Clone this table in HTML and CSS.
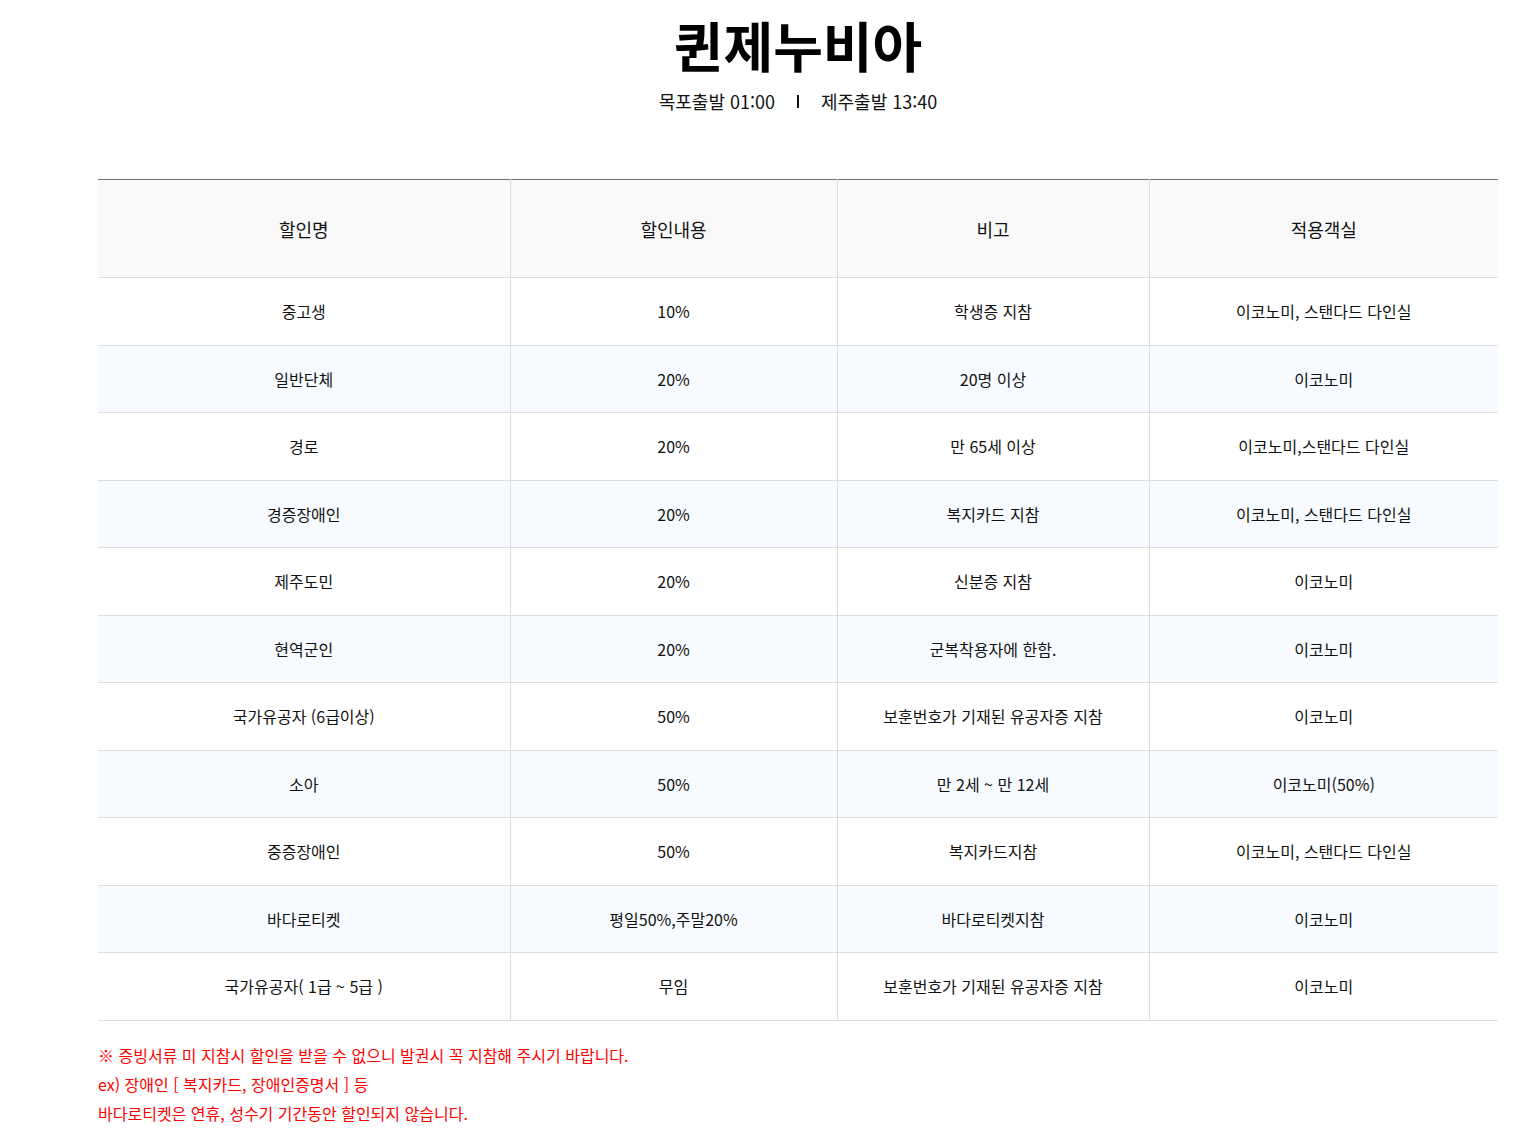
FILE: index.html
```html
<!DOCTYPE html>
<html lang="ko">
<head>
<meta charset="utf-8">
<title>퀸제누비아</title>
<link rel="stylesheet" href="styles.css">
</head>
<body>
<div class="wrap">
  <h1 class="title">퀸제누비아</h1>
  <p class="sched"><span>목포출발 01:00</span><span class="bar"></span><span>제주출발 13:40</span></p>
  <table class="tbl">
    <colgroup>
      <col class="c1"><col class="c2"><col class="c3"><col class="c4">
    </colgroup>
    <thead>
      <tr><th>할인명</th><th>할인내용</th><th>비고</th><th>적용객실</th></tr>
    </thead>
    <tbody>
      <tr><td>중고생</td><td>10%</td><td>학생증 지참</td><td>이코노미, 스탠다드 다인실</td></tr>
      <tr><td>일반단체</td><td>20%</td><td>20명 이상</td><td>이코노미</td></tr>
      <tr><td>경로</td><td>20%</td><td>만 65세 이상</td><td>이코노미,스탠다드 다인실</td></tr>
      <tr><td>경증장애인</td><td>20%</td><td>복지카드 지참</td><td>이코노미, 스탠다드 다인실</td></tr>
      <tr><td>제주도민</td><td>20%</td><td>신분증 지참</td><td>이코노미</td></tr>
      <tr><td>현역군인</td><td>20%</td><td>군복착용자에 한함.</td><td>이코노미</td></tr>
      <tr><td>국가유공자 (6급이상)</td><td>50%</td><td>보훈번호가 기재된 유공자증 지참</td><td>이코노미</td></tr>
      <tr><td>소아</td><td>50%</td><td>만 2세 ~ 만 12세</td><td>이코노미(50%)</td></tr>
      <tr><td>중증장애인</td><td>50%</td><td>복지카드지참</td><td>이코노미, 스탠다드 다인실</td></tr>
      <tr><td>바다로티켓</td><td>평일50%,주말20%</td><td>바다로티켓지참</td><td>이코노미</td></tr>
      <tr><td>국가유공자( 1급 ~ 5급 )</td><td>무임</td><td>보훈번호가 기재된 유공자증 지참</td><td>이코노미</td></tr>
    </tbody>
  </table>
  <div class="notes">
    <p>※ 증빙서류 미 지참시 할인을 받을 수 없으니 발권시 꼭 지참해 주시기 바랍니다.</p>
    <p>ex) 장애인 [ 복지카드, 장애인증명서 ] 등</p>
    <p>바다로티켓은 연휴, 성수기 기간동안 할인되지 않습니다.</p>
  </div>
</div>
</body>
</html>
```
FILE: styles.css
```css
html, body {
  margin: 0;
  padding: 0;
  background: #fff;
}
body {
  font-family: "Noto Sans CJK KR", "Noto Sans", sans-serif;
  color: #111;
}
.wrap {
  width: 1400px;
  margin-left: 98px;
}
.title {
  margin: 0;
  padding-top: 10px;
  text-align: center;
  font-size: 54px;
  font-weight: 700;
  line-height: 70px;
  color: #000;
}
.sched {
  margin: 8px 0 0;
  display: flex;
  justify-content: center;
  align-items: center;
  gap: 21px;
  font-size: 18px;
  line-height: 26px;
  color: #111;
}
.sched .bar {
  display: inline-block;
  width: 2px;
  height: 13px;
  background: #111;
  margin: 0 1px;
}
.tbl {
  margin-top: 65px;
  width: 1400px;
  border-collapse: collapse;
  table-layout: fixed;
  border-top: 1px solid #777;
  font-size: 16px;
}
.c1 { width: 412px; }
.c2 { width: 327px; }
.c3 { width: 312px; }
.c4 { width: 349px; }
.tbl th {
  height: 97px;
  background: #f9f9f9;
  font-weight: 400;
  font-size: 18px;
  color: #111;
  border-bottom: 1px solid #ddd;
  border-left: 1px solid #ddd;
  padding: 0;
}
.tbl td {
  height: 66.5px;
  text-align: center;
  border-bottom: 1px solid #ddd;
  border-left: 1px solid #ddd;
  padding: 0;
  color: #111;
}
.tbl th:first-child, .tbl td:first-child { border-left: none; }
.tbl tbody tr:nth-child(even) td { background: #f7fbff; }
.notes {
  margin-top: 20px;
  color: #ff0000;
  font-size: 16px;
  line-height: 29px;
}
.notes p { margin: 0; }
```
